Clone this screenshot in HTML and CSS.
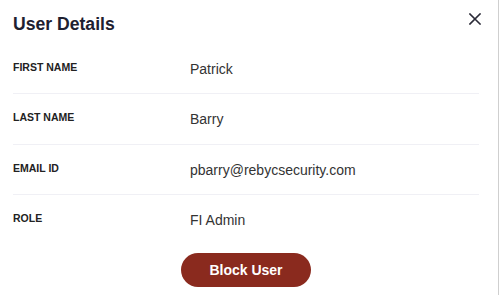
FILE: index.html
```html
<!DOCTYPE html>
<html>
<head>
<meta charset="utf-8">
<link rel="stylesheet" href="styles.css">
</head>
<body>
<div class="modal">
  <div class="header">
    <h1 class="title">User Details</h1>
    <button class="close" aria-label="Close">
      <svg width="12" height="12" viewBox="0 0 12 12"><path d="M1 1L11 11M11 1L1 11" stroke="#2b2b38" stroke-width="1.6" stroke-linecap="square"/></svg>
    </button>
  </div>
  <div class="list">
    <div class="row"><div class="label">FIRST NAME</div><div class="value">Patrick</div></div>
    <div class="row"><div class="label">LAST NAME</div><div class="value">Barry</div></div>
    <div class="row"><div class="label">EMAIL ID</div><div class="value">pbarry@rebycsecurity.com</div></div>
    <div class="row"><div class="label">ROLE</div><div class="value">FI Admin</div></div>
  </div>
  <div class="actions">
    <button class="block">Block User</button>
  </div>
</div>
</body>
</html>
```
FILE: styles.css
```css
html, body {
  margin: 0;
  padding: 0;
  background: #fff;
}
body {
  font-family: "Liberation Sans", Arial, sans-serif;
}
.modal {
  width: 499px;
  height: 295px;
  box-sizing: border-box;
  border-right: 1px solid #cfcfcf;
  padding: 13.6px 17px 0 13px;
}
.header {
  display: flex;
  justify-content: space-between;
  align-items: flex-start;
}
.title {
  margin: 0;
  font-size: 17.6px;
  font-weight: bold;
  color: #1e2030;
  line-height: normal;
}
.close {
  border: 0;
  background: none;
  padding: 0;
  margin: -0.6px 0 0 0;
  width: 12px;
  height: 12px;
  display: flex;
}
.list {
  margin: 9px 2px 0 0;
}
.row {
  display: flex;
  align-items: flex-start;
  padding: 17px 0 16.5px;
  border-bottom: 1px solid #f0f0f5;
}
.row:last-child {
  border-bottom: 0;
}
.label {
  width: 177px;
  font-size: 10.5px;
  font-weight: bold;
  color: #222;
  line-height: normal;
  padding-top: 0.3px;
}
.value {
  font-size: 14px;
  color: #333;
  line-height: normal;
}
.actions {
  display: flex;
  justify-content: center;
  margin: 8.5px 2px 0 0;
}
.block {
  width: 130px;
  height: 34px;
  border: 0;
  border-radius: 17px;
  background: #8a2a1e;
  color: #fff;
  font-family: "Liberation Sans", Arial, sans-serif;
  font-size: 14px;
  font-weight: bold;
}
```
